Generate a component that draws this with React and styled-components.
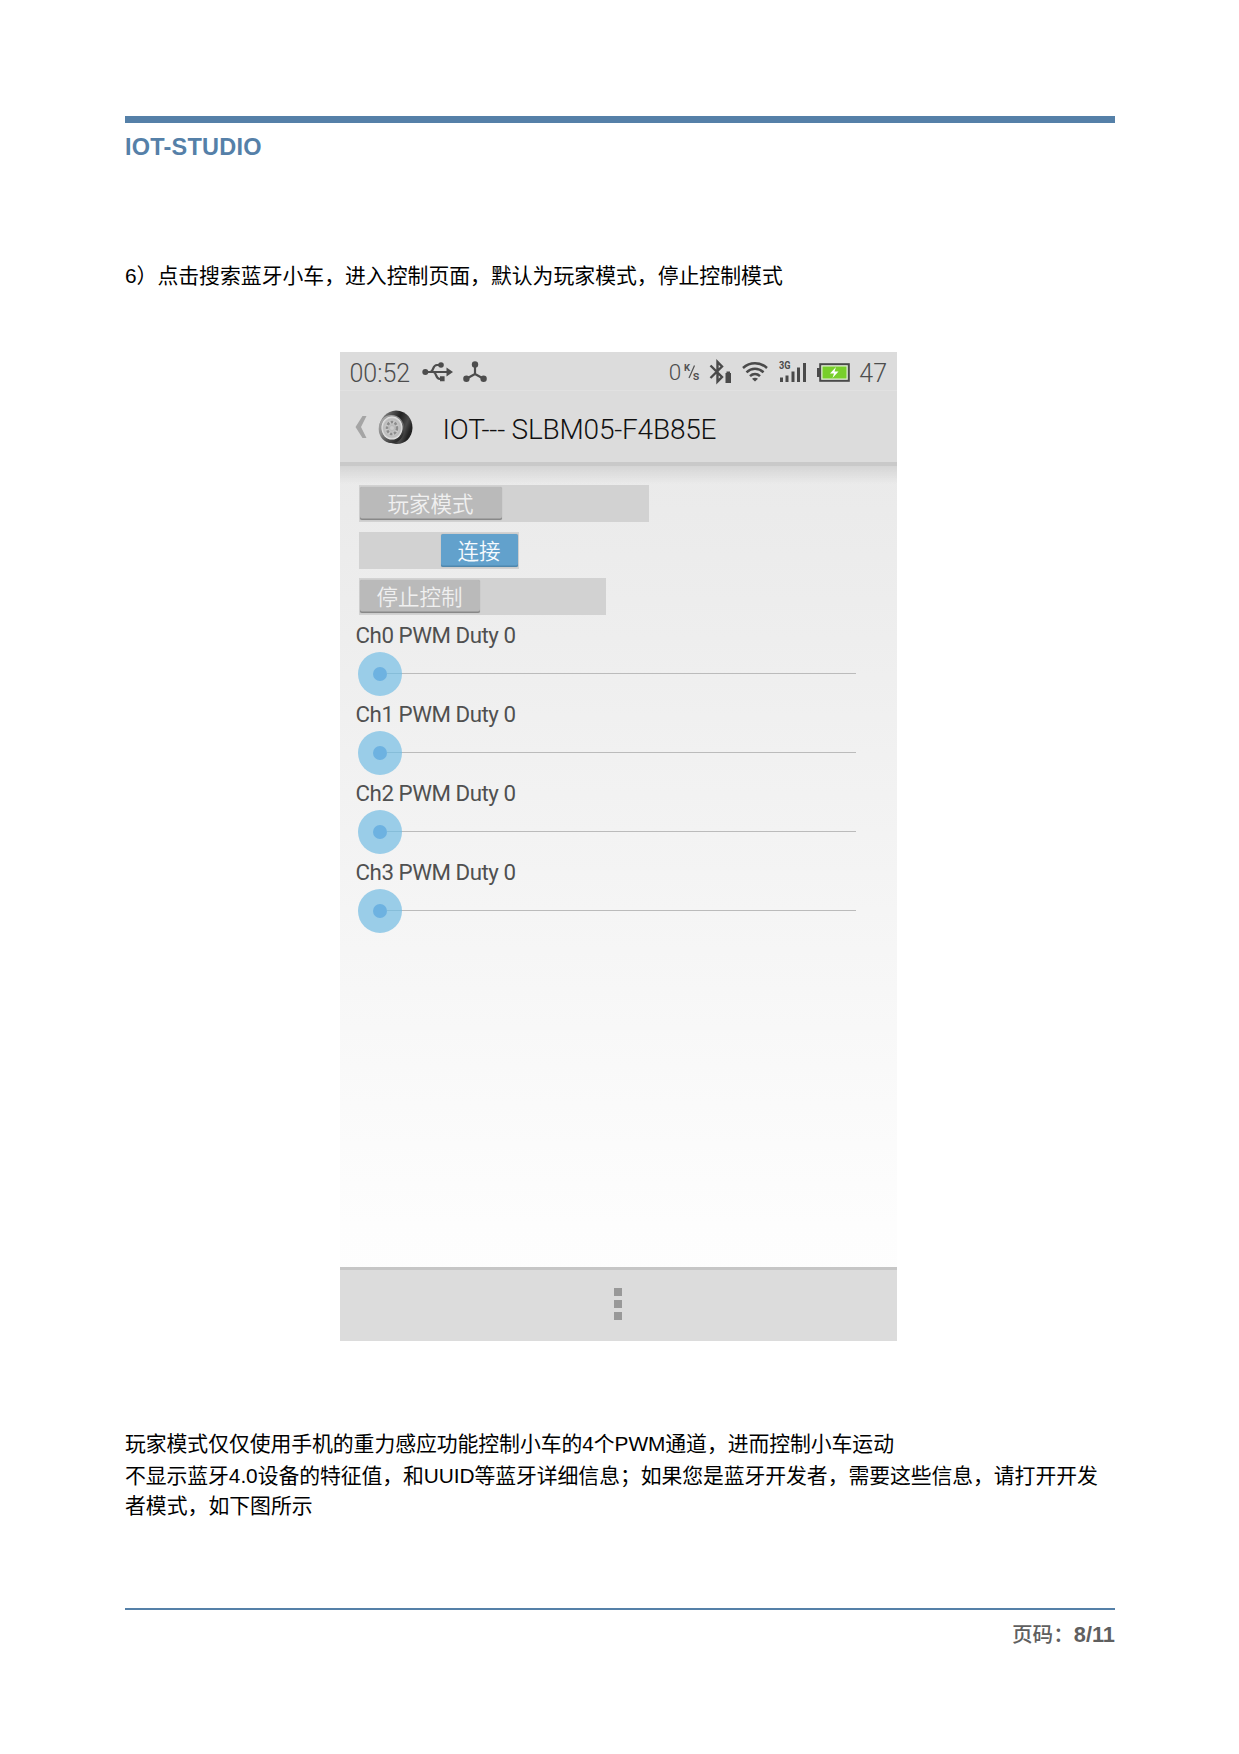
import React from "react";
import styled, { createGlobalStyle } from "styled-components";

const Global = createGlobalStyle`
  * { box-sizing: border-box; }
  body { margin: 0; background: #fff; }
`;

const docFont = `"Liberation Sans", "Noto Sans CJK SC", sans-serif`;
const phoneFont = `Roboto, "Noto Sans CJK SC", sans-serif`;

const Page = styled.div`
  width: 1239px;
  height: 1754px;
  padding: 116px 124px 0 125px;
  background: #fff;
  color: #000;
  font-family: ${docFont};
  display: flex;
  flex-direction: column;
`;

const Header = styled.header`
  border-top: 7px solid #5580a8;
  height: 136px;
  padding-top: 10px;
`;

const Brand = styled.h1`
  margin: 0;
  color: #5580a8;
  font-size: 23.5px;
  line-height: 28px;
  font-weight: 700;
  letter-spacing: 0.22px;
`;

const Line = styled.p`
  margin: 0;
  font-size: 20.85px;
  line-height: ${(p) => p.$height || 31}px;
  white-space: nowrap;
  letter-spacing: ${(p) => p.$track || 0}px;
`;

const Lead = styled.section`
  height: 100px;
  padding-top: 7.5px;
`;

const Phone = styled.section`
  width: 557px;
  height: 989px;
  margin-left: 214.5px;
  flex: none;
  display: flex;
  flex-direction: column;
  font-family: ${phoneFont};
  background: linear-gradient(#e9e9e9 70px, #ededed 25%, #fdfdfd 88%, #fefefe);
`;

const StatusBar = styled.div`
  height: 39px;
  flex: none;
  background: #dcdcdc;
  border-bottom: 1px solid #e1e1e1;
  display: flex;
  align-items: center;
  justify-content: space-between;
  padding: 2px 9.5px 0 10px;
  color: #4d4d4d;
`;

const Cluster = styled.div`
  display: flex;
  align-items: center;
`;

const StatusText = styled.span`
  font-size: 25px;
  line-height: 36px;
  font-weight: 300;
  padding-top: 3px;
  margin-left: ${(p) => p.$gap || 0}px;
`;

const Speed = styled(StatusText)`
  font-size: 22.5px;
  padding-top: 0;
`;

const ActionBar = styled.div`
  height: 75px;
  flex: none;
  background: #dcdcdc;
  border-bottom: 4px solid #c9c9c9;
  display: flex;
  align-items: center;
  padding: 1px 0 0 15px;
  color: #111;
`;

const Title = styled.h2`
  margin: 6px 0 0 30px;
  font-size: 28px;
  line-height: 34px;
  font-weight: 350;
  letter-spacing: -0.2px;
`;

const Content = styled.div`
  flex: 1;
  padding: 19px 16px 0 19px;
  background: linear-gradient(rgba(0, 0, 0, 0.09), rgba(0, 0, 0, 0) 18px);
`;

const Track = styled.div`
  width: ${(p) => p.$width}px;
  height: 37px;
  margin-bottom: 9.5px;
  padding: 2px 1px 1px 1px;
  background: #d2d2d2;
  display: flex;
  justify-content: ${(p) => (p.$on ? "flex-end" : "flex-start")};
`;

const Thumb = styled.div`
  width: ${(p) => p.$width}px;
  height: 33px;
  border-radius: 2px;
  background: ${(p) => (p.$on ? "#62a1cc" : "#bababa")};
  box-shadow: inset 0 -1.5px 0 ${(p) => (p.$on ? "#4f87ad" : "#888")}, 0 0 1px rgba(0, 0, 0, 0.25);
  color: ${(p) => (p.$on ? "#f6fafd" : "#f0f0f0")};
  font-size: 21.5px;
  line-height: 35px;
  font-weight: 350;
  text-align: center;
`;

const Channels = styled.div`
  margin: -3px 0 0 -1px;
`;

const Channel = styled.div`
  height: 79px;
`;

const ChannelLabel = styled.div`
  margin-left: -2px;
  height: 30px;
  font-size: 22.3px;
  line-height: 27px;
  color: #505050;
  font-weight: 400;
  letter-spacing: -0.46px;
`;

const Slider = styled.div`
  width: 498px;
  height: 44px;
  display: flex;
  align-items: center;
`;

const Knob = styled.div`
  width: 44px;
  height: 44px;
  flex: none;
  border-radius: 50%;
  background: #9acde8;
  display: flex;
  align-items: center;
  justify-content: flex-end;
`;

const KnobCore = styled.div`
  width: 14px;
  height: 14px;
  border-radius: 50%;
  background: #6db2e1;
`;

const KnobLine = styled.div`
  width: 15px;
  height: 1px;
  background: #86bdd9;
`;

const Rail = styled.div`
  flex: 1;
  height: 1px;
  background: #bbb;
`;

const MenuBar = styled.div`
  height: 74px;
  flex: none;
  border-top: 3px solid #c6c6c6;
  background: #dcdcdc;
  display: flex;
  flex-direction: column;
  align-items: center;
  padding-top: 18px;
  gap: 4px;
`;

const MenuDot = styled.i`
  width: 8px;
  height: 8px;
  background: #999;
`;

const Notes = styled.section`
  margin-top: 87px;
  height: 180px;
`;

const Footer = styled.footer`
  border-top: 2px solid #5580a8;
  padding-top: 10px;
  text-align: right;
  font-size: 21.8px;
  line-height: 30px;
  font-weight: 700;
  color: #5f5f5f;
`;

const PageLabel = styled.span`
  font-size: 20.6px;
  font-weight: 500;
`;

const Icon = styled.svg`
  display: block;
  flex: none;
  overflow: visible;
  margin-left: ${(p) => p.$gap || 0}px;
`;

const UsbIcon = () => (
  <Icon $gap={12} width="31" height="22" viewBox="0 0 31 22" fill="none" stroke="#4d4d4d" strokeWidth="2.200">
    <path d="M3 11H25M8 11C12 11 10 4 15 4H19M11 11C15 11 13 18 18 18H20" />
    <circle cx="3.3" cy="11" r="3" fill="#4d4d4d" stroke="none" />
    <circle cx="19" cy="4" r="2.8" fill="#4d4d4d" stroke="none" />
    <path d="M18 15.2h4.6v5H18zM24.5 6.5L31 11l-6.500 4.500z" fill="#4d4d4d" stroke="none" />
  </Icon>
);

const HubIcon = () => (
  <Icon $gap={10} width="24" height="22" viewBox="0 0 24 22" fill="#4d4d4d">
    <path d="M12 4V13M12 13L3 18M12 13L21 18" fill="none" stroke="#4d4d4d" strokeWidth="2.200" />
    <circle cx="12" cy="3.500" r="3.200" />
    <circle cx="3.400" cy="17.800" r="3.200" />
    <circle cx="20.600" cy="17.800" r="3.200" />
  </Icon>
);

const RateIcon = () => (
  <Icon $gap={2} width="17" height="24" viewBox="0 -2 17 24" fill="#505050" fontFamily="Roboto, sans-serif">
    <text x="1" y="9" fontSize="9.500" fontWeight="700">K</text>
    <path d="M11.500 3.500L6 16" stroke="#505050" strokeWidth="1.200" />
    <text x="9.800" y="17.500" fontSize="13" fontWeight="500">s</text>
  </Icon>
);

const BluetoothIcon = () => (
  <Icon $gap={9} width="23" height="24" viewBox="0 0 23 24" fill="none" stroke="#4a4a4a" strokeWidth="2.400">
    <path d="M1.500 5.500L13 17L8.500 21.500V2L13 6.500L1.500 18" />
    <rect x="16.500" y="13" width="5.500" height="10" fill="#4a4a4a" stroke="none" />
    <rect x="17.500" y="11.500" width="3.500" height="2" fill="#4a4a4a" stroke="none" />
  </Icon>
);

const WifiIcon = () => (
  <Icon $gap={9.5} width="26" height="20" viewBox="0 0 26 20" fill="none" stroke="#4a4a4a" strokeWidth="2.500">
    <path d="M1 6C8 -0.300 18 -0.300 25 6M4.500 10.300C9.500 5.600 16.500 5.600 21.500 10.300M8 14.200C11 11.400 15 11.400 18 14.200" />
    <path d="M13 19.500L10 16.700Q13 14.700 16 16.700Z" fill="#4a4a4a" stroke="none" />
  </Icon>
);

const SignalIcon = () => (
  <Icon $gap={11} width="28" height="28" viewBox="0 -3 28 28" fill="#4a4a4a">
    <text x="0" y="8" fontSize="10.500" fontWeight="700" fontFamily="Roboto, sans-serif" textLength="11.500" lengthAdjust="spacingAndGlyphs">3G</text>
    <path d="M1 16.500h3V21H1zM6.500 14.500h3V21h-3zM12.500 10.500h3V21h-3zM18 6.500h3V21h-3zM24 2h3v19h-3z" />
  </Icon>
);

const BatteryIcon = () => (
  <Icon $gap={10} width="33" height="19" viewBox="0 0 33 19">
    <rect x="0" y="5" width="3" height="9" fill="#4a4a4a" />
    <rect x="3.200" y="1.200" width="28.600" height="16.600" fill="#e4f1d8" stroke="#4a4a4a" strokeWidth="2" />
    <rect x="5.500" y="3.500" width="24" height="12" fill="#78cf2b" />
    <path d="M19 4L13 10.500H17L15.500 15L21.500 8.500H17.500Z" fill="#fff" />
  </Icon>
);

const BackIcon = () => (
  <Icon width="12" height="22" viewBox="0 0 12 22">
    <path d="M7.500 0H11.500L6 11L11.500 22H7.500L0.500 11Z" fill="#a5a5a5" />
  </Icon>
);

const WheelIcon = () => (
  <Icon $gap={11} width="35" height="35" viewBox="0 0 35 35">
    <defs>
      <linearGradient id="tyre" x1="0" y1="0" x2="1" y2="0.400">
        <stop offset="0" stopColor="#aaa" />
        <stop offset="0.350" stopColor="#555" />
        <stop offset="0.600" stopColor="#222" />
        <stop offset="0.850" stopColor="#4a4a4a" />
        <stop offset="1" stopColor="#222" />
      </linearGradient>
      <linearGradient id="wall" x1="0" y1="0" x2="0.700" y2="1">
        <stop offset="0" stopColor="#b5b5b5" />
        <stop offset="0.500" stopColor="#8a8a8a" />
        <stop offset="1" stopColor="#222" />
      </linearGradient>
      <radialGradient id="rim">
        <stop offset="0" stopColor="#aaa" />
        <stop offset="0.500" stopColor="#ccc" />
        <stop offset="0.800" stopColor="#bbb" />
        <stop offset="1" stopColor="#eee" />
      </radialGradient>
    </defs>
    <path d="M18 0.500C29 1 34.500 9 34.500 18C34 28 27 34.500 18 34C7 33 0.500 26 1 17C2 8 9 1 18 0.500Z" fill="url(#tyre)" />
    <ellipse cx="13.500" cy="19" rx="12.800" ry="14" fill="url(#wall)" />
    <ellipse cx="14" cy="18" rx="10.500" ry="11.500" fill="url(#rim)" />
    <ellipse cx="14" cy="18" rx="5" ry="6" fill="none" stroke="#8c8c8c" strokeWidth="2.500" strokeDasharray="2.500 1.500" />
    <circle cx="14" cy="18" r="2" fill="#ccc" />
  </Icon>
);

const channels = [0, 1, 2, 3];

export default function App() {
  return (
    <Page>
      <Global />
      <Header>
        <Brand>IOT-STUDIO</Brand>
      </Header>
      <Lead>
        <Line>6）点击搜索蓝牙小车，进入控制页面，默认为玩家模式，停止控制模式</Line>
      </Lead>
      <Phone>
        <StatusBar>
          <Cluster>
            <StatusText>00:52</StatusText>
            <UsbIcon />
            <HubIcon />
          </Cluster>
          <Cluster>
            <Speed>0</Speed>
            <RateIcon />
            <BluetoothIcon />
            <WifiIcon />
            <SignalIcon />
            <BatteryIcon />
            <StatusText $gap={9.5}>47</StatusText>
          </Cluster>
        </StatusBar>
        <ActionBar>
          <BackIcon />
          <WheelIcon />
          <Title>IOT--- SLBM05-F4B85E</Title>
        </ActionBar>
        <Content>
          <Track $width={290}><Thumb $width={142}>玩家模式</Thumb></Track>
          <Track $width={160} $on><Thumb $width={77} $on>连接</Thumb></Track>
          <Track $width={247}><Thumb $width={120}>停止控制</Thumb></Track>
          <Channels>
            {channels.map((n) => (
              <Channel key={n}>
                <ChannelLabel>Ch{n} PWM Duty 0</ChannelLabel>
                <Slider>
                  <Knob><KnobCore /><KnobLine /></Knob>
                  <Rail />
                </Slider>
              </Channel>
            ))}
          </Channels>
        </Content>
        <MenuBar><MenuDot /><MenuDot /><MenuDot /></MenuBar>
      </Phone>
      <Notes>
        <Line $track={-0.06} $height={32}>玩家模式仅仅使用手机的重力感应功能控制小车的4个PWM通道，进而控制小车运动</Line>
        <Line $track={-0.07} $height={31}>不显示蓝牙4.0设备的特征值，和UUID等蓝牙详细信息；如果您是蓝牙开发者，需要这些信息，请打开开发</Line>
        <Line $height={30}>者模式，如下图所示</Line>
      </Notes>
      <Footer><PageLabel>页码：</PageLabel>8/11</Footer>
    </Page>
  );
}
